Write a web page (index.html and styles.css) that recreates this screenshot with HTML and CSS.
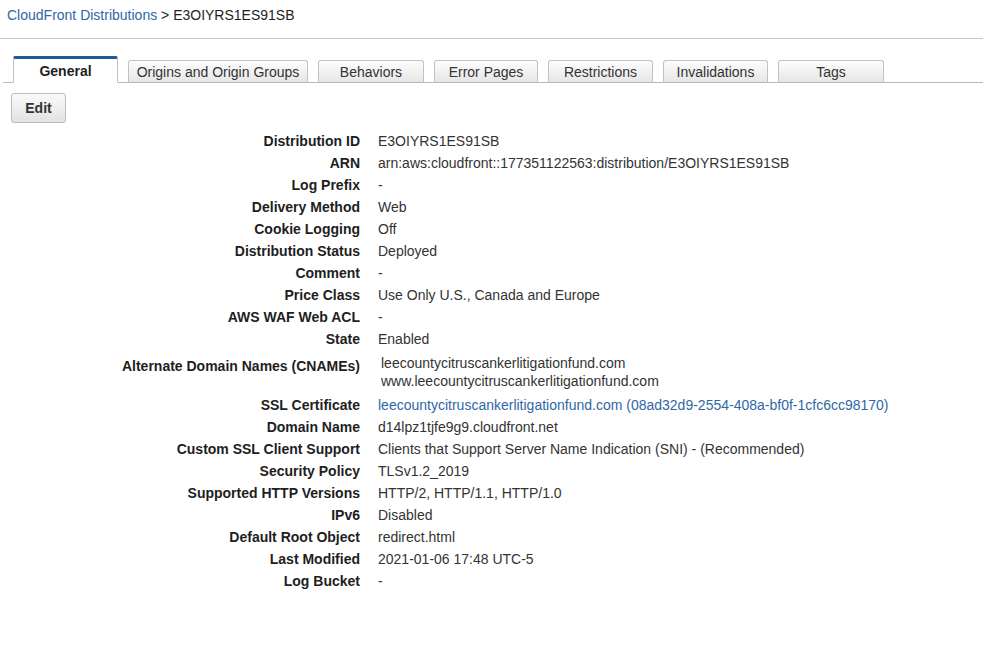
FILE: index.html
```html
<!DOCTYPE html>
<html>
<head>
<meta charset="utf-8">
<title>CloudFront Distribution</title>
<link rel="stylesheet" href="styles.css">
</head>
<body>
<div class="breadcrumb"><a href="#" class="crumb-link">CloudFront Distributions</a> &gt; E3OIYRS1ES91SB</div>
<div class="divider"></div>
<div class="tabs">
  <div class="tab active tab-general">General</div>
  <div class="tab tab-origins">Origins and Origin Groups</div>
  <div class="tab tab-behaviors">Behaviors</div>
  <div class="tab tab-errors">Error Pages</div>
  <div class="tab tab-restrictions">Restrictions</div>
  <div class="tab tab-invalidations">Invalidations</div>
  <div class="tab tab-tags">Tags</div>
</div>
<div class="toolbar"><button class="btn">Edit</button></div>
<div class="details">
  <div class="label">Distribution ID</div><div class="value">E3OIYRS1ES91SB</div>
  <div class="label">ARN</div><div class="value">arn:aws:cloudfront::177351122563:distribution/E3OIYRS1ES91SB</div>
  <div class="label">Log Prefix</div><div class="value">-</div>
  <div class="label">Delivery Method</div><div class="value">Web</div>
  <div class="label">Cookie Logging</div><div class="value">Off</div>
  <div class="label">Distribution Status</div><div class="value">Deployed</div>
  <div class="label">Comment</div><div class="value">-</div>
  <div class="label">Price Class</div><div class="value">Use Only U.S., Canada and Europe</div>
  <div class="label">AWS WAF Web ACL</div><div class="value">-</div>
  <div class="label">State</div><div class="value">Enabled</div>
  <div class="label label-multi">Alternate Domain Names (CNAMEs)</div>
  <div class="value value-multi"><div>leecountycitruscankerlitigationfund.com</div><div>www.leecountycitruscankerlitigationfund.com</div></div>
  <div class="label">SSL Certificate</div><div class="value"><a href="#" class="link">leecountycitruscankerlitigationfund.com (08ad32d9-2554-408a-bf0f-1cfc6cc98170)</a></div>
  <div class="label">Domain Name</div><div class="value">d14lpz1tjfe9g9.cloudfront.net</div>
  <div class="label">Custom SSL Client Support</div><div class="value">Clients that Support Server Name Indication (SNI) - (Recommended)</div>
  <div class="label">Security Policy</div><div class="value">TLSv1.2_2019</div>
  <div class="label">Supported HTTP Versions</div><div class="value">HTTP/2, HTTP/1.1, HTTP/1.0</div>
  <div class="label">IPv6</div><div class="value">Disabled</div>
  <div class="label">Default Root Object</div><div class="value">redirect.html</div>
  <div class="label">Last Modified</div><div class="value">2021-01-06 17:48 UTC-5</div>
  <div class="label">Log Bucket</div><div class="value">-</div>
</div>
</body>
</html>
```
FILE: styles.css
```css
html, body {
  margin: 0;
  padding: 0;
  background: #ffffff;
}
body {
  font-family: "Liberation Sans", Arial, sans-serif;
  font-size: 14px;
  color: #1e1e1e;
}
.breadcrumb {
  padding: 6px 0 0 7px;
  line-height: 18px;
  height: 22px;
  color: #1e1e1e;
}
.crumb-link, .link {
  color: #2f67a6;
  text-decoration: none;
}
.divider {
  margin-top: 10px;
  height: 1px;
  background: #c8c8c8;
}
.tabs {
  margin-top: 18px;
  display: flex;
  align-items: flex-end;
  gap: 10px;
  border-bottom: 1px solid #b8b8b8;
  margin-left: 3px;
  padding-left: 10px;
  height: 25px;
}
.tab {
  box-sizing: border-box;
  flex: none;
  height: 23px;
  padding: 0;
  margin-bottom: -1px;
  line-height: 23px;
  text-align: center;
  color: #333333;
  background: linear-gradient(#fdfdfd, #e6e6e6);
  border: 1px solid #c2c2c2;
  border-bottom: 1px solid #b8b8b8;
  border-radius: 3px 3px 0 0;
}
.tab.active {
  height: 27px;
  background: #ffffff;
  border-top: 3px solid #1f5a99;
  border-bottom: 1px solid #ffffff;
  border-radius: 2px 2px 0 0;
  font-weight: bold;
  color: #1e1e1e;
  line-height: 24px;
}
.tab-general { width: 105px; }
.tab-origins { width: 180px; }
.tab-behaviors { width: 106px; }
.tab-errors { width: 104px; }
.tab-restrictions { width: 105px; }
.tab-invalidations { width: 105px; }
.tab-tags { width: 106px; }
.toolbar {
  padding: 10px 0 0 11px;
  height: 29px;
}
.btn {
  box-sizing: border-box;
  width: 55px;
  height: 30px;
  font-family: "Liberation Sans", Arial, sans-serif;
  font-size: 14px;
  font-weight: bold;
  color: #333333;
  background: linear-gradient(#fafafa, #e2e2e2);
  border: 1px solid #bcbcbc;
  border-radius: 3px;
  padding: 0;
}
.details {
  margin-top: 8px;
  display: grid;
  grid-template-columns: 360px 1fr;
  column-gap: 18px;
}
.label {
  text-align: right;
  font-weight: bold;
  line-height: 22px;
  color: #1e1e1e;
}
.value {
  line-height: 22px;
  color: #333333;
}
.label-multi {
  padding-top: 5px;
  padding-bottom: 17px;
}
.value-multi {
  padding: 4px 0 4px 3px;
  line-height: 18px;
}
```
